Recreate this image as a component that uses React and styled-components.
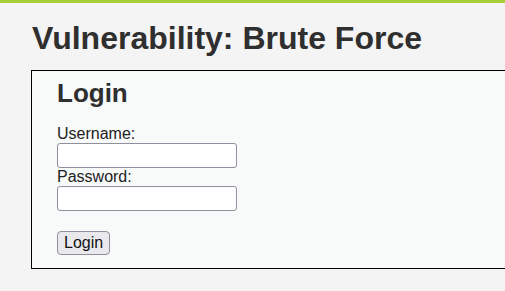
import React from "react";
import styled, { createGlobalStyle } from "styled-components";

const GlobalStyle = createGlobalStyle`
  html, body {
    margin: 0;
    padding: 0;
    background: #f4f4f4;
    font-family: "Liberation Sans", Arial, sans-serif;
    color: #2f2f2f;
  }
`;

const Page = styled.div`
  min-height: 100vh;
  overflow: hidden;
`;

const TopBar = styled.div`
  height: 3px;
  background: #a6ce39;
`;

const Body = styled.div`
  padding: 0 0 0 31px;
`;

const Title = styled.h1`
  margin: 17px 0 13px 1px;
  font-size: 32px;
  line-height: 37px;
  font-weight: bold;
  color: #2f2f2f;
`;

const CodeArea = styled.div`
  width: 640px;
  background: #f8f9f9;
  border: 1px solid #000;
  padding: 7px 25px 13px 25px;
`;

const FormTitle = styled.h2`
  margin: 0 0 17px 0;
  font-size: 26px;
  line-height: 30px;
  font-weight: bold;
  color: #2f2f2f;
`;

const Form = styled.form`
  display: flex;
  flex-direction: column;
  align-items: flex-start;
`;

const Label = styled.label`
  font-size: 16px;
  line-height: 18px;
  color: #222;
`;

const Input = styled.input`
  box-sizing: border-box;
  width: 180px;
  height: 25px;
  margin: 0;
  padding: 1px 4px;
  border: 1px solid #8f8f9d;
  border-radius: 3px;
  background: #fff;
  font-family: inherit;
  font-size: 14px;
`;

const Button = styled.button`
  margin-top: 20px;
  box-sizing: border-box;
  height: 24px;
  padding: 0 6px;
  border: 1px solid #8f8f9d;
  border-radius: 4px;
  background: #e9e9ed;
  color: #111;
  font-family: "Liberation Sans", Arial, sans-serif;
  font-size: 16px;
  line-height: 18px;
`;

export default function App() {
  return (
    <>
      <GlobalStyle />
      <Page>
        <TopBar />
        <Body>
          <Title>Vulnerability: Brute Force</Title>
          <CodeArea>
            <FormTitle>Login</FormTitle>
            <Form onSubmit={(ev) => ev.preventDefault()}>
              <Label htmlFor="username">Username:</Label>
              <Input id="username" type="text" name="username" />
              <Label htmlFor="password">Password:</Label>
              <Input id="password" type="password" name="password" />
              <Button type="submit">Login</Button>
            </Form>
          </CodeArea>
        </Body>
      </Page>
    </>
  );
}
